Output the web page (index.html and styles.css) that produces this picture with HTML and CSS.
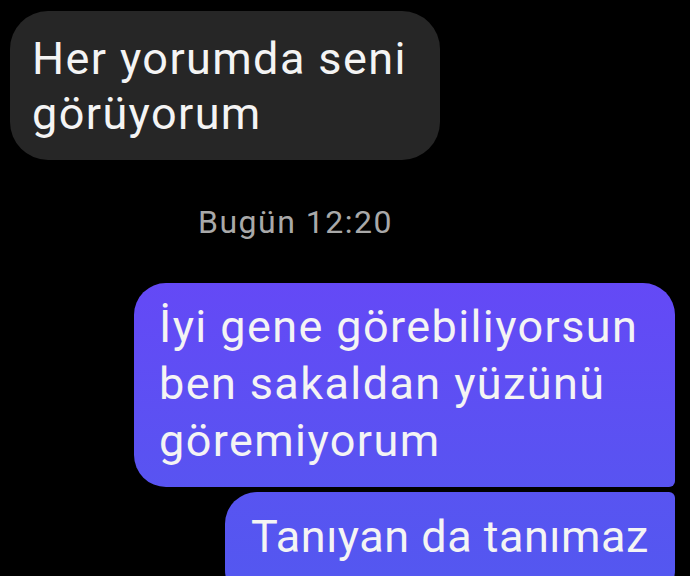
FILE: index.html
```html
<!DOCTYPE html>
<html lang="tr">
<head>
<meta charset="utf-8">
<title>Sohbet</title>
<link rel="stylesheet" href="styles.css">
</head>
<body>
  <main class="thread">
    <div class="row row-in">
      <div class="bubble bubble-in">Her yorumda seni<br>görüyorum</div>
    </div>
    <div class="stamp">Bugün 12:20</div>
    <div class="row row-out">
      <div class="bubble bubble-out bubble-out-first">İyi gene görebiliyorsun<br>ben sakaldan yüzünü<br>göremiyorum</div>
      <div class="bubble bubble-out bubble-out-next">Tanıyan da tanımaz</div>
    </div>
  </main>
</body>
</html>
```

FILE: styles.css
```css
html, body {
  margin: 0;
  padding: 0;
  background: #000;
}

body {
  width: 690px;
  height: 576px;
  overflow: hidden;
  font-family: Roboto, "Noto Sans", "Liberation Sans", sans-serif;
  color: #f4f4f4;
}

.thread {
  display: flex;
  flex-direction: column;
  padding-top: 11px;
}

.row {
  display: flex;
  flex-direction: column;
}

.row-in {
  align-items: flex-start;
  padding-left: 10px;
}

.row-out {
  align-items: flex-end;
  padding-right: 15px;
  gap: 5px;
}

.bubble {
  box-sizing: border-box;
  font-size: 45px;
  letter-spacing: 1.4px;
  white-space: nowrap;
}

.bubble-in {
  width: 430px;
  height: 149px;
  padding: 20px 0 0 22px;
  line-height: 55px;
  background: #262626;
  border-radius: 38px;
}

.stamp {
  margin: 42px 0 41px 198px;
  font-size: 32px;
  line-height: 40px;
  letter-spacing: 1.5px;
  color: #a9a9a9;
}

/* one gradient across the viewport, shared by all outgoing bubbles */
.bubble-out {
  background: linear-gradient(180deg, #7040f8 0%, #6449f6 49%, #5854f1 85%, #5457f0 100%);
  background-attachment: fixed;
  line-height: 57px;
}

.bubble-out-first {
  width: 541px;
  height: 204px;
  padding: 15px 0 0 25px;
  border-radius: 32px 32px 6px 32px;
}

.bubble-out-next {
  width: 450px;
  height: 110px;
  padding: 16px 0 0 26px;
  letter-spacing: 0.5px;
  border-radius: 32px 6px 32px 32px;
}
```
